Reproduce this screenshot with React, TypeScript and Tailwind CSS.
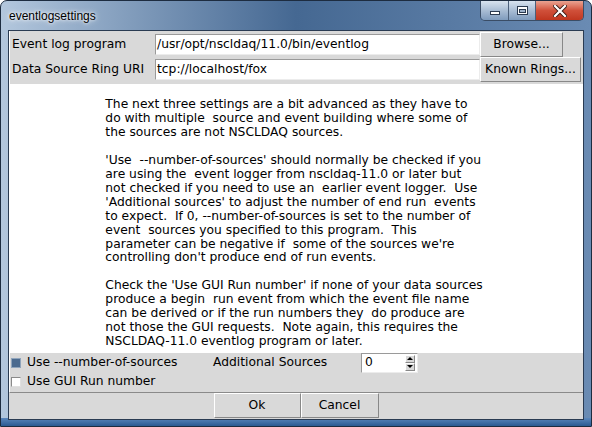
import React from "react";

const helpText = `The next three settings are a bit advanced as they have to
do with multiple  source and event building where some of
the sources are not NSCLDAQ sources.

'Use  --number-of-sources' should normally be checked if you
are using the  event logger from nscldaq-11.0 or later but
not checked if you need to use an  earlier event logger.  Use
'Additional sources' to adjust the number of end run  events
to expect.  If 0, --number-of-sources is set to the number of
event  sources you specified to this program.  This
parameter can be negative if  some of the sources we're
controlling don't produce end of run events.

Check the 'Use GUI Run number' if none of your data sources
produce a begin  run event from which the event file name
can be derived or if the run numbers they  do produce are
not those the GUI requests.  Note again, this requires the
NSCLDAQ-11.0 eventlog program or later.`;

const TkButton: React.FC<{ label: string; className?: string }> = ({ label, className }) => (
  <div
    className={
      "h-[25px] flex items-center justify-center bg-[#d9d9d9] border border-t-white border-l-white border-r-[#888888] border-b-[#888888] " +
      (className ?? "")
    }
  >
    {label}
  </div>
);

const Entry: React.FC<{ value: string }> = ({ value }) => (
  <div className="w-[325px] h-[21px] flex items-center bg-white border border-t-[#9a9a9a] border-l-[#9a9a9a] border-r-[#ececec] border-b-[#ececec] pl-[1px]">
    {value}
  </div>
);

const CaptionButtons: React.FC = () => (
  <div className="absolute top-0 right-[7px] flex h-[20px] rounded-b-[5px] border border-t-0 border-[#3a4d66] overflow-hidden">
    <div className="w-[28px] h-full bg-gradient-to-b from-[#d8e3ef] via-[#a9bdd4] to-[#7f9bbd] border-r border-[#4b5f7a] flex items-center justify-center">
      <div className="w-[10px] h-[4px] mt-[5px] bg-white border border-[#2b3a4f]" />
    </div>
    <div className="w-[27px] h-full bg-gradient-to-b from-[#d8e3ef] via-[#a9bdd4] to-[#7f9bbd] border-r border-[#4b5f7a] flex items-center justify-center">
      <div className="w-[11px] h-[9px] border border-[#2b3a4f] bg-white flex items-center justify-center">
        <div className="w-[7px] h-[4px] mt-[1px] bg-[#9fb3cb] border border-[#2b3a4f]" />
      </div>
    </div>
    <div className="w-[47px] h-full bg-gradient-to-b from-[#e9a392] via-[#d0503a] to-[#c0361f] flex items-center justify-center">
      <svg width="14" height="12" viewBox="0 0 14 12">
        <path d="M2 1 L12 11 M12 1 L2 11" stroke="#3a1a14" strokeWidth="4" strokeLinecap="square" />
        <path d="M2 1 L12 11 M12 1 L2 11" stroke="#ffffff" strokeWidth="2.2" strokeLinecap="square" />
      </svg>
    </div>
  </div>
);

const App: React.FC = () => {
  return (
    <div className="w-[592px] h-[427px] relative flex flex-col rounded-t-[7px] border border-[#1d2c40] bg-gradient-to-r from-[#b3c7dd] via-[#456892] to-[#6a8bb3] font-['DejaVu_Sans',sans-serif] text-[12.3px] text-black overflow-hidden">
      <div className="absolute inset-x-0 bottom-0 h-[8px] bg-gradient-to-b from-[#5a86bb] to-[#2b5a92]" />
      <div className="h-[29px] flex items-center pl-[8px] shrink-0 relative">
        <span className="font-['Liberation_Sans',sans-serif] text-[12px] text-black [text-shadow:0_0_6px_#ffffff,0_0_3px_#ffffff]">
          eventlogsettings
        </span>
      </div>
      <CaptionButtons />

      <div className="relative flex-1 ml-[7px] mr-[7px] mb-[6px] border border-[#2a3b52] bg-[#d9d9d9] flex flex-col">
        {/* entry rows */}
        <div className="h-[53px] flex flex-col border-l border-white">
          <div className="h-[26px] flex items-center">
            <div className="w-[145px] pl-[2px]">Event log program</div>
            <Entry value="/usr/opt/nscldaq/11.0/bin/eventlog" />
            <TkButton label="Browse..." className="w-[83px] self-start mt-[1px]" />
          </div>
          <div className="h-[25px] flex items-center">
            <div className="w-[145px] pl-[2px]">Data Source Ring URI</div>
            <Entry value="tcp://localhost/fox" />
            <TkButton label="Known Rings..." className="w-[101px]" />
          </div>
        </div>

        {/* help text */}
        <div className="h-[269px] bg-white flex justify-center pt-[14px]">
          <div className="whitespace-pre leading-[13.95px] pr-[4px]">{helpText}</div>
        </div>

        {/* options */}
        <div className="h-[40px] flex flex-col border-l border-white border-b border-b-[#8a8a8a]">
          <div className="h-[19px] flex items-center">
            <div className="w-[10px] h-[10px] ml-[1px] bg-[#4c6b8f] border border-[#8fa4bc]" />
            <div className="ml-[6px] w-[186px]">Use --number-of-sources</div>
            <div className="w-[148px]">Additional Sources</div>
            <div className="w-[57px] h-[20px] flex items-center bg-white border border-t-[#9a9a9a] border-l-[#9a9a9a] border-r-[#ececec] border-b-[#ececec]">
              <span className="ml-[3px] flex-1">0</span>
              <div className="flex flex-col mr-[2px]">
                <div className="w-[10px] h-[8px] bg-[#d9d9d9] border border-t-white border-l-white border-r-[#888888] border-b-[#888888] flex items-center justify-center">
                  <div className="w-0 h-0 border-x-[3px] border-x-transparent border-b-[3px] border-b-black" />
                </div>
                <div className="w-[10px] h-[8px] bg-[#d9d9d9] border border-t-white border-l-white border-r-[#888888] border-b-[#888888] flex items-center justify-center">
                  <div className="w-0 h-0 border-x-[3px] border-x-transparent border-t-[3px] border-t-black" />
                </div>
              </div>
            </div>
          </div>
          <div className="h-[19px] flex items-center">
            <div className="w-[10px] h-[10px] ml-[1px] bg-white border border-t-[#8a8a8a] border-l-[#8a8a8a] border-r-[#e0e0e0] border-b-[#e0e0e0]" />
            <div className="ml-[6px]">Use GUI Run number</div>
          </div>
        </div>

        {/* buttons */}
        <div className="flex-1 flex justify-center items-start">
          <TkButton label="Ok" className="w-[87px]" />
          <TkButton label="Cancel" className="w-[78px]" />
        </div>
      </div>
    </div>
  );
};

export default App;
